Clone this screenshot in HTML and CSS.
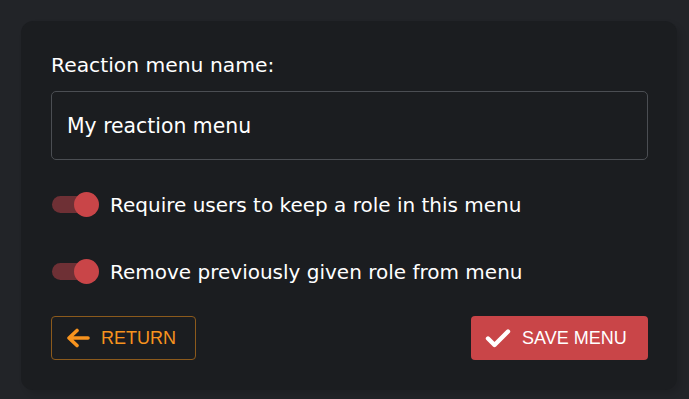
FILE: index.html
```html
<!DOCTYPE html>
<html>
<head>
<meta charset="utf-8">
<link rel="stylesheet" href="styles.css">
</head>
<body>
<div class="card">
  <label class="label" for="name">Reaction menu name:</label>
  <div class="input">My reaction menu</div>
  <div class="toggle-row first">
    <span class="switch"><span class="track"></span><span class="thumb"></span></span>
    <span class="toggle-text">Require users to keep a role in this menu</span>
  </div>
  <div class="toggle-row second">
    <span class="switch"><span class="track"></span><span class="thumb"></span></span>
    <span class="toggle-text">Remove previously given role from menu</span>
  </div>
  <div class="actions">
    <button class="btn btn-return">
      <svg class="icon" width="24" height="20" viewBox="0 0 24 20"><path d="M22 10H4M11 2.5L3 10l8 7.5" fill="none" stroke="#f7931e" stroke-width="3.6" stroke-linecap="round" stroke-linejoin="round"/></svg>
      <span>RETURN</span>
    </button>
    <button class="btn btn-save">
      <svg class="icon" width="26" height="20" viewBox="0 0 26 20"><path d="M3 10.5l6.5 6.5L23 3.5" fill="none" stroke="#fff" stroke-width="4.4" stroke-linecap="round" stroke-linejoin="round"/></svg>
      <span>SAVE MENU</span>
    </button>
  </div>
</div>
</body>
</html>
```

FILE: styles.css
```css
html, body {
  margin: 0;
  padding: 0;
  background: #222428;
  height: 100%;
}
body {
  font-family: "DejaVu Sans", "Open Sans", sans-serif;
  color: #ffffff;
}
.card {
  box-sizing: border-box;
  margin: 21px 0 0 21px;
  width: 656px;
  height: 369px;
  background: #1b1d20;
  border-radius: 12px;
  padding: 32px 29px 30px 30px;
  box-shadow: 4px 4px 6px rgba(0, 0, 0, 0.12);
  display: flex;
  flex-direction: column;
}
.label {
  display: block;
  font-size: 20.3px;
  line-height: 24px;
  height: 24px;
}
.input {
  box-sizing: border-box;
  margin-top: 14px;
  height: 69px;
  border: 1px solid #4b4e53;
  border-radius: 5px;
  padding: 0 15px;
  display: flex;
  align-items: center;
  font-size: 20.4px;
  line-height: 24px;
}
.toggle-row {
  display: flex;
  align-items: center;
  height: 25px;
}
.toggle-row.first { margin-top: 32px; }
.toggle-row.second { margin-top: 42px; }
.switch {
  position: relative;
  width: 48px;
  height: 25px;
  margin-left: 1px;
  flex: none;
}
.track {
  position: absolute;
  left: 0;
  top: 4px;
  width: 40px;
  height: 17px;
  border-radius: 9px;
  background: #6e3035;
}
.thumb {
  position: absolute;
  left: 22px;
  top: 0;
  width: 25px;
  height: 25px;
  border-radius: 50%;
  background: #c94548;
}
.toggle-text {
  margin-left: 10px;
  font-size: 20px;
  line-height: 24px;
}
.actions {
  margin-top: 32px;
  display: flex;
  justify-content: space-between;
}
.btn {
  box-sizing: border-box;
  height: 44px;
  border-radius: 4px;
  font-family: "Liberation Sans", Arial, sans-serif;
  font-size: 18px;
  display: flex;
  align-items: center;
  cursor: pointer;
}
.btn-return {
  width: 145px;
  background: transparent;
  border: 1px solid #8c5a1c;
  color: #f7931e;
  padding: 0 0 0 14px;
}
.btn-return .icon { margin-right: 11px; }
.btn-save {
  width: 177px;
  background: #c94548;
  border: none;
  color: #ffffff;
  padding: 0 0 0 14px;
}
.btn-save .icon { margin-right: 11px; }
```
